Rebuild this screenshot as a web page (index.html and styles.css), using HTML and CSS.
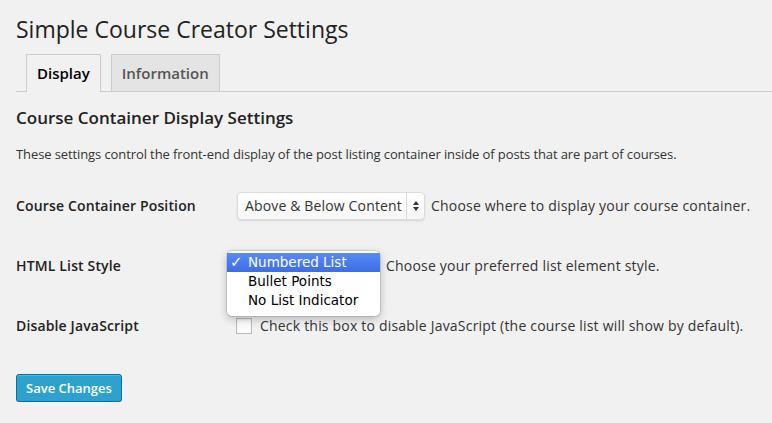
FILE: index.html
```html
<!DOCTYPE html>
<html lang="en">
<head>
<meta charset="utf-8">
<title>Simple Course Creator Settings</title>
<link rel="stylesheet" href="styles.css">
</head>
<body>
<div class="wrap">
  <h2 class="page-title">Simple Course Creator Settings</h2>
  <nav class="tabs">
    <a class="tab tab-active" href="#">Display</a>
    <a class="tab" href="#">Information</a>
  </nav>
  <h3 class="section-title">Course Container Display Settings</h3>
  <p class="section-desc">These settings control the front-end display of the post listing container inside of posts that are part of courses.</p>
  <div class="form-table">
    <div class="row">
      <div class="label">Course Container Position</div>
      <div class="field">
        <div class="select">
          <span class="select-text">Above &amp; Below Content</span>
          <span class="select-arrows">
            <svg width="8" height="12" viewBox="0 0 8 12"><path d="M4 1 L7 5 L1 5 Z" fill="#333"/><path d="M4 11 L7 7 L1 7 Z" fill="#333"/></svg>
          </span>
        </div>
        <span class="desc">Choose where to display your course container.</span>
      </div>
    </div>
    <div class="row">
      <div class="label">HTML List Style</div>
      <div class="field">
        <div class="select-wrap">
          <ul class="menu">
            <li class="menu-item menu-item-selected"><span class="check">✓</span>Numbered List</li>
            <li class="menu-item"><span class="check"></span>Bullet Points</li>
            <li class="menu-item"><span class="check"></span>No List Indicator</li>
          </ul>
        </div>
        <span class="desc">Choose your preferred list element style.</span>
      </div>
    </div>
    <div class="row">
      <div class="label">Disable JavaScript</div>
      <div class="field field-check">
        <span class="checkbox"></span>
        <span class="desc">Check this box to disable JavaScript (the course list will show by default).</span>
      </div>
    </div>
  </div>
  <div class="submit">
    <button class="button-primary" type="button">Save Changes</button>
  </div>
</div>
</body>
</html>
```

FILE: styles.css
```css
html, body {
  margin: 0;
  padding: 0;
  background: #f1f1f1;
}

body {
  font-family: "Open Sans", "Liberation Sans", sans-serif;
  color: #444;
  font-size: 13px;
}

.wrap {
  padding: 0 0 0 16px;
}

.page-title {
  margin: 0;
  padding-top: 15px;
  font-size: 23px;
  line-height: 29px;
  font-weight: 400;
  color: #222;
}

.tabs {
  display: flex;
  gap: 10px;
  margin-top: 10px;
  padding-left: 10px;
  border-bottom: 1px solid #ccc;
  height: 37px;
}

.tab {
  display: block;
  height: 37px;
  box-sizing: border-box;
  padding: 6px 10px 0;
  border: 1px solid #ccc;
  border-bottom: none;
  background: #e4e4e4;
  color: #555;
  font-size: 15px;
  line-height: 24px;
  font-weight: 600;
  text-decoration: none;
}

.tab-active {
  background: #f1f1f1;
  color: #000;
  height: 38px;
  position: relative;
  z-index: 1;
}

.section-title {
  margin: 14px 0 0;
  font-size: 17px;
  line-height: 24px;
  font-weight: 600;
  color: #222;
}

.section-desc {
  margin: 14px 0 0;
  font-size: 13px;
  line-height: 20px;
  color: #333;
  letter-spacing: -0.1px;
}

.form-table {
  margin-top: 12px;
  display: flex;
  flex-direction: column;
}

.row {
  display: grid;
  grid-template-columns: 220px 1fr;
  align-items: center;
  height: 60px;
}

.label {
  font-size: 14px;
  font-weight: 600;
  color: #222;
  line-height: 20px;
  letter-spacing: 0.15px;
}

.field {
  display: flex;
  align-items: center;
  gap: 6px;
  padding-left: 1px;
}

.field-check {
  padding-left: 0;
  gap: 8px;
}

.desc {
  font-size: 14px;
  color: #333;
  line-height: 20px;
  letter-spacing: 0.2px;
  white-space: nowrap;
}

.select {
  display: flex;
  align-items: stretch;
  height: 28px;
  box-sizing: border-box;
  width: 188px;
  border: 1px solid #dcdcdc;
  border-radius: 4px;
  background: linear-gradient(#ffffff, #f7f7f7);
  box-shadow: 0 1px 2px rgba(0,0,0,0.12);
  font-size: 14px;
  color: #333;
}

.select-text {
  flex: 1;
  padding-left: 7px;
  line-height: 26px;
  white-space: nowrap;
  letter-spacing: 0.15px;
}

.select-arrows {
  width: 17px;
  border-left: 1px solid #dcdcdc;
  display: flex;
  align-items: center;
  justify-content: center;
}

.select-wrap {
  position: relative;
  width: 143px;
  height: 28px;
}

.menu {
  position: absolute;
  left: -10px;
  top: -1px;
  width: 153px;
  box-sizing: border-box;
  margin: 0;
  padding: 2px 0 6px;
  list-style: none;
  background: #fff;
  border-radius: 5px;
  box-shadow: 0 0 0 1px rgba(0,0,0,0.1), 0 3px 8px rgba(0,0,0,0.25);
  font-family: "DejaVu Sans", "Liberation Sans", sans-serif;
  font-size: 13.5px;
  color: #000;
  z-index: 5;
}

.menu-item {
  display: flex;
  align-items: center;
  height: 19px;
  line-height: 19px;
  padding-left: 3px;
  white-space: nowrap;
}

.check {
  display: inline-block;
  width: 18px;
  font-size: 15px;
  font-weight: 700;
}

.menu-item-selected {
  background: linear-gradient(#5a8af2, #3b6de6);
  color: #fff;
}

.checkbox {
  display: block;
  width: 16px;
  height: 16px;
  box-sizing: border-box;
  border: 1px solid #bbb;
  background: #fbfbfb;
  box-shadow: inset 0 1px 2px rgba(0,0,0,0.07);
}

.submit {
  margin-top: 18px;
}

.button-primary {
  height: 28px;
  padding: 0 9px 1px;
  box-sizing: border-box;
  border: 1px solid #0074a2;
  border-radius: 3px;
  background: #2ea2cc;
  box-shadow: inset 0 1px 0 rgba(120,200,230,0.5), 0 1px 0 rgba(0,0,0,0.15);
  color: #fff;
  font-family: "Open Sans", "Liberation Sans", sans-serif;
  font-size: 13px;
  font-weight: 600;
  line-height: 26px;
  white-space: nowrap;
}
```
